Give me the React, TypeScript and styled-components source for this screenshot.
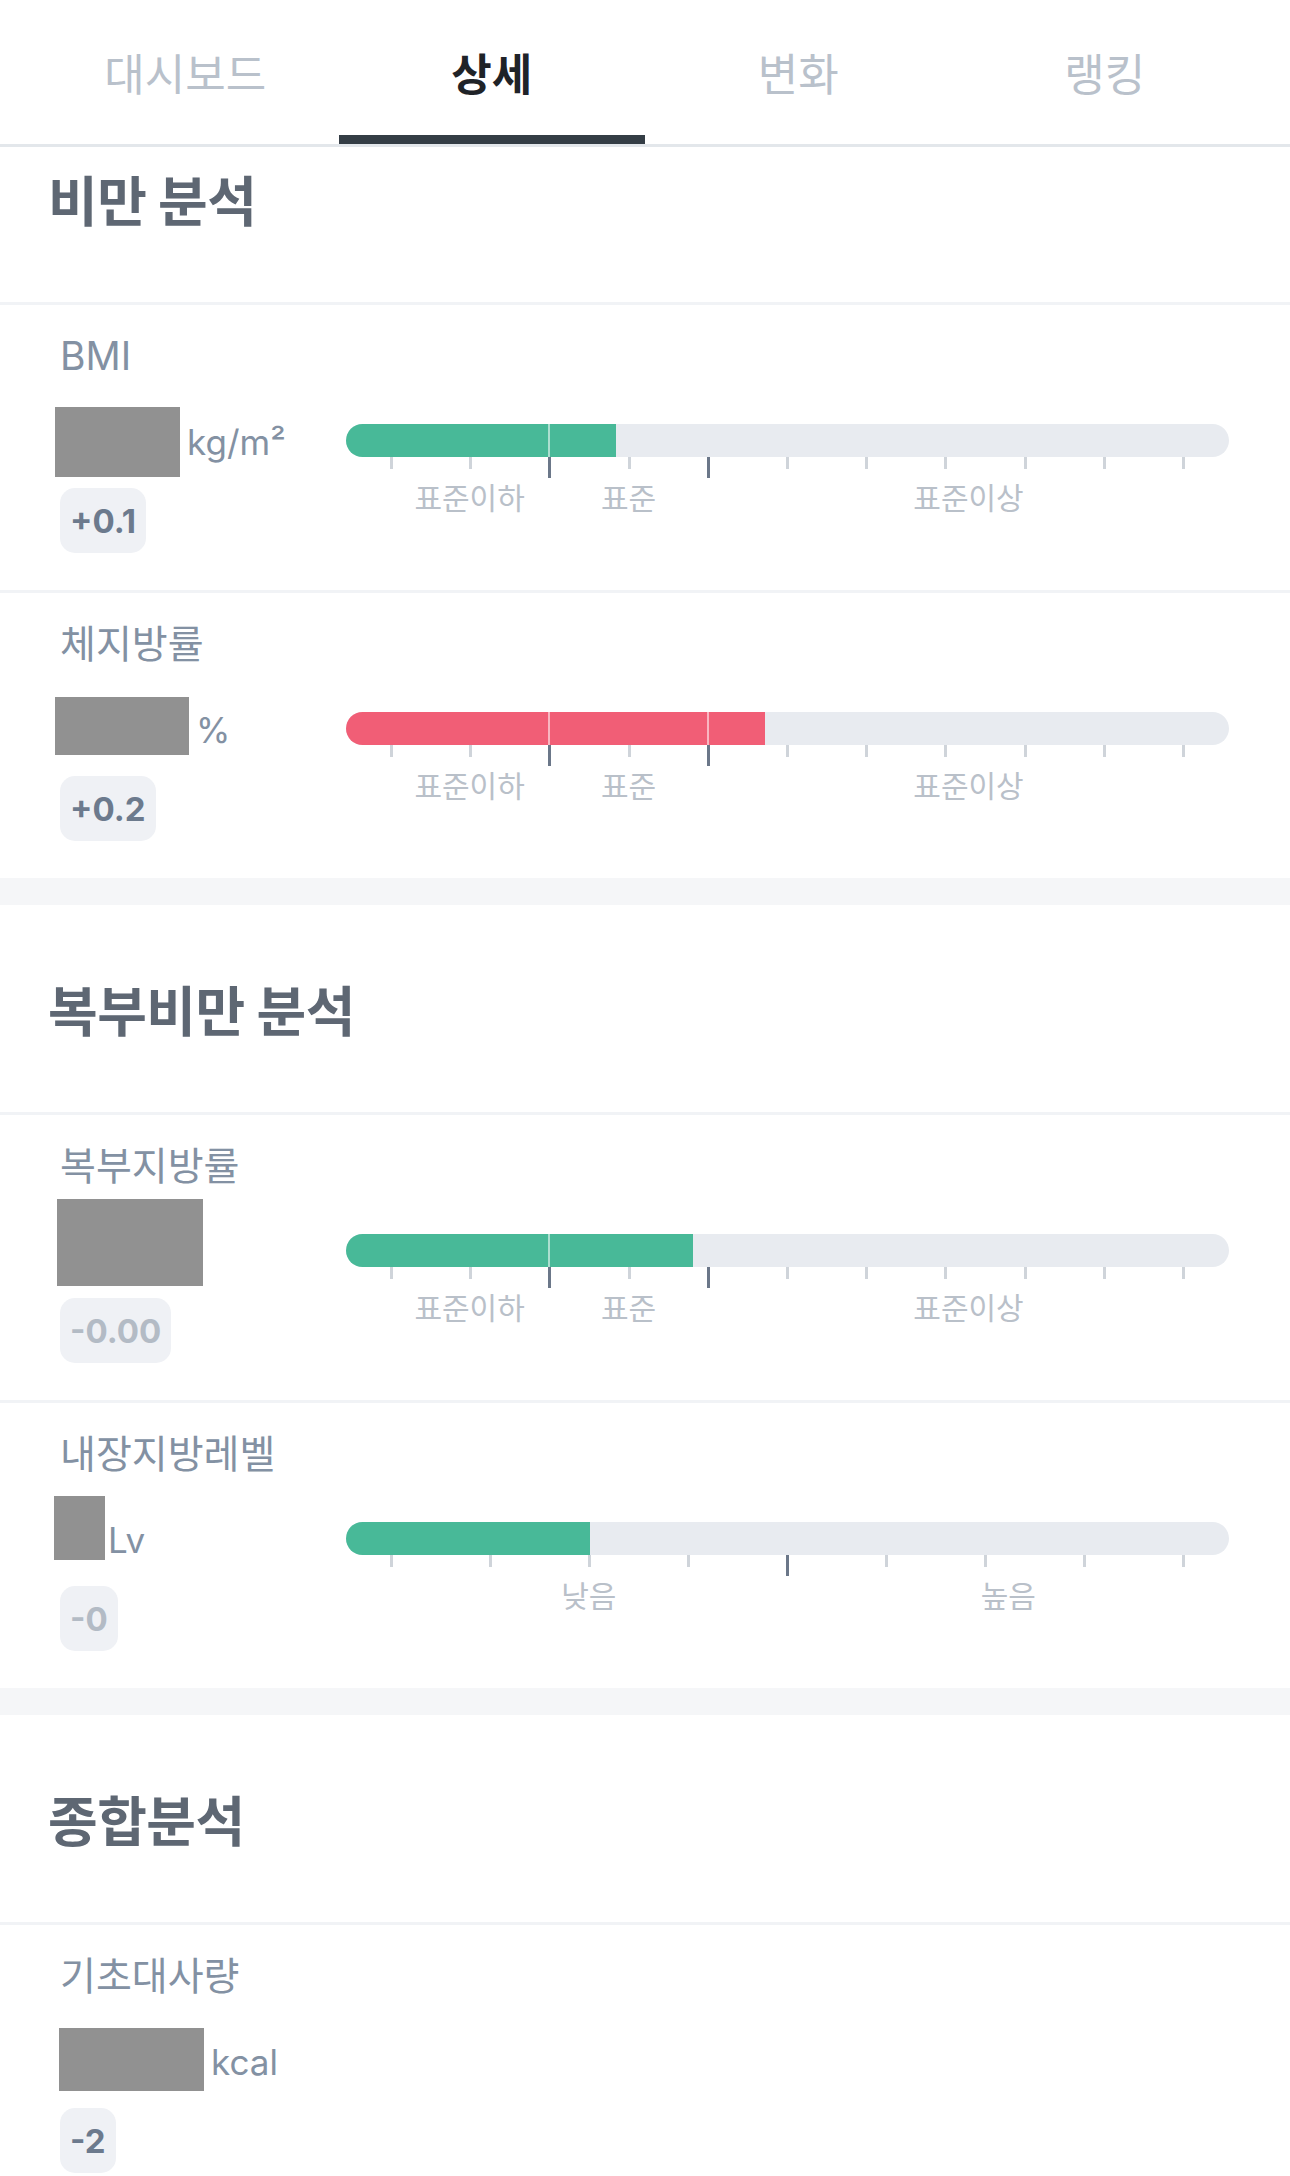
import styled, { createGlobalStyle } from "styled-components";

const GlobalStyle = createGlobalStyle`
  body {
    margin: 0;
    background: #ffffff;
    font-family: Inter, "Noto Sans CJK KR", sans-serif;
  }
`;

const Page = styled.div`
  width: 1290px;
  background: #ffffff;
`;

const TabBar = styled.nav`
  display: grid;
  grid-template-columns: repeat(4, 1fr);
  height: 144px;
  padding: 0 32px;
  border-bottom: 3px solid #e3e7eb;
`;

const Tab = styled.div<{ $active?: boolean }>`
  display: flex;
  align-items: center;
  justify-content: center;
  padding-top: 9px;
  border-bottom: 9px solid ${(p) => (p.$active ? "#343d45" : "transparent")};
  font-family: "Noto Sans CJK KR", sans-serif;
  font-size: 44px;
  font-weight: ${(p) => (p.$active ? 600 : 400)};
  color: ${(p) => (p.$active ? "#1f2328" : "#b9c1cb")};
`;

const SectionHeader = styled.div<{ $first?: boolean }>`
  padding: ${(p) => (p.$first ? "26px" : "78px")} 48px 77px;
`;

const SectionTitle = styled.h2`
  margin: 0;
  font-family: "Noto Sans CJK KR", sans-serif;
  font-size: 54px;
  line-height: 52px;
  font-weight: 700;
  letter-spacing: -0.5px;
  color: #5e6773;
`;

const Band = styled.div`
  height: 27px;
  background: #f5f6f8;
`;

const Item = styled.div`
  display: grid;
  grid-template-columns: 286px 1fr;
  grid-template-rows: auto 70px auto;
  padding: 25px 61px 37px 60px;
  border-top: 3px solid #f1f3f6;
`;

const Label = styled.div`
  grid-column: 1 / -1;
  margin-bottom: 25px;
  font-size: 39px;
  line-height: 52px;
  color: #8391a3;
`;

const ValueRow = styled.div<{ $gap: number }>`
  grid-column: 1;
  grid-row: 2;
  display: flex;
  align-items: center;
  gap: ${(p) => p.$gap}px;
  height: 70px;
`;

// 수치는 가려진 상태로 표시
const Redacted = styled.span<{ $w: number; $h: number; $dx: number; $dy: number }>`
  align-self: flex-start;
  flex: none;
  width: ${(p) => p.$w}px;
  height: ${(p) => p.$h}px;
  margin-left: ${(p) => p.$dx}px;
  margin-top: ${(p) => p.$dy}px;
  background: #919191;
`;

const Unit = styled.span`
  font-size: 35px;
  line-height: 44px;
  color: #8391a3;
`;

const Badge = styled.div<{ $muted?: boolean }>`
  grid-column: 1;
  grid-row: 3;
  justify-self: start;
  display: flex;
  align-items: center;
  height: 65px;
  margin-top: 11px;
  padding: 0 10px;
  border-radius: 15px;
  background: #eff1f5;
  font-size: 33px;
  font-weight: 700;
  color: ${(p) => (p.$muted ? "#b3bbc5" : "#6c7a8d")};
`;

const Gauge = styled.div`
  grid-column: 2;
  grid-row: 2 / 4;
  margin-top: 17px;
`;

const Track = styled.div`
  position: relative;
  height: 33px;
  border-radius: 17px;
  background: #e8ebf0;
  overflow: hidden;
`;

const Fill = styled.div<{ $color: string }>`
  height: 100%;
  background: ${(p) => p.$color};
`;

const Divider = styled.span`
  position: absolute;
  top: 0;
  bottom: 0;
  width: 2px;
  margin-left: -1px;
  background: rgba(255, 255, 255, 0.55);
`;

const TickRow = styled.div`
  display: flex;
  justify-content: space-between;
  align-items: flex-start;
  height: 21px;
  padding: 0 5%;
`;

const Tick = styled.span<{ $major?: boolean }>`
  width: 3px;
  height: ${(p) => (p.$major ? 21 : 12)}px;
  background: ${(p) => (p.$major ? "#6b7789" : "#cfd4da")};
`;

const ScaleLabels = styled.div`
  position: relative;
  height: 36px;
`;

const ScaleLabel = styled.span`
  position: absolute;
  top: 0;
  transform: translateX(-50%);
  font-family: "Noto Sans CJK KR", sans-serif;
  font-size: 30px;
  line-height: 36px;
  color: #b9c0c9;
  white-space: nowrap;
`;

interface IGauge {
  ticks: number;
  major: number[];
  fill: number;
  color: string;
  labels: { text: string; at: number }[];
}

interface IMetric {
  name: string;
  unit?: string;
  gap?: number;
  box: { w: number; h: number; dx: number; dy: number };
  diff: string;
  muted?: boolean;
  gauge?: IGauge;
}

const GREEN = "#48b998";
const RED = "#f15e76";

const standardLabels = [
  { text: "표준이하", at: 14 },
  { text: "표준", at: 32 },
  { text: "표준이상", at: 70.5 },
];

const sections: { title: string; metrics: IMetric[] }[] = [
  {
    title: "비만 분석",
    metrics: [
      {
        name: "BMI",
        unit: "kg/m²",
        box: { w: 125, h: 70, dx: -5, dy: 0 },
        diff: "+0.1",
        gauge: { ticks: 11, major: [2, 4], fill: 30.6, color: GREEN, labels: standardLabels },
      },
      {
        name: "체지방률",
        unit: "%",
        box: { w: 134, h: 58, dx: -5, dy: 2 },
        diff: "+0.2",
        gauge: { ticks: 11, major: [2, 4], fill: 47.5, color: RED, labels: standardLabels },
      },
    ],
  },
  {
    title: "복부비만 분석",
    metrics: [
      {
        name: "복부지방률",
        box: { w: 146, h: 87, dx: -3, dy: -18 },
        diff: "-0.00",
        muted: true,
        gauge: { ticks: 11, major: [2, 4], fill: 39.3, color: GREEN, labels: standardLabels },
      },
      {
        name: "내장지방레벨",
        unit: "Lv",
        gap: 3,
        box: { w: 51, h: 64, dx: -6, dy: -9 },
        diff: "-0",
        muted: true,
        gauge: {
          ticks: 9,
          major: [4],
          fill: 27.6,
          color: GREEN,
          labels: [
            { text: "낮음", at: 27.5 },
            { text: "높음", at: 75 },
          ],
        },
      },
    ],
  },
  {
    title: "종합분석",
    metrics: [
      {
        name: "기초대사량",
        unit: "kcal",
        box: { w: 145, h: 63, dx: -1, dy: 1 },
        diff: "-2",
      },
    ],
  },
];

// 눈금 위치: 트랙 양 끝 5% 안쪽에서 균등 배치
const tickPos = (k: number, n: number) => 5 + (k * 90) / (n - 1);

function GaugeBar({ gauge }: { gauge: IGauge }) {
  // 기준선은 채워진 구간 안에서만 보인다
  const dividers = gauge.major
    .map((k) => tickPos(k, gauge.ticks))
    .filter((pos) => pos < gauge.fill);
  return (
    <Gauge>
      <Track>
        <Fill $color={gauge.color} style={{ width: `${gauge.fill}%` }} />
        {dividers.map((pos) => (
          <Divider key={pos} style={{ left: `${pos}%` }} />
        ))}
      </Track>
      <TickRow>
        {Array.from({ length: gauge.ticks }).map((_, k) => (
          <Tick key={k} $major={gauge.major.includes(k)} />
        ))}
      </TickRow>
      <ScaleLabels>
        {gauge.labels.map((l) => (
          <ScaleLabel key={l.text} style={{ left: `${l.at}%` }}>
            {l.text}
          </ScaleLabel>
        ))}
      </ScaleLabels>
    </Gauge>
  );
}

function App() {
  const tabs = ["대시보드", "상세", "변화", "랭킹"];
  return (
    <Page>
      <GlobalStyle />
      <TabBar>
        {tabs.map((t) => (
          <Tab key={t} $active={t === "상세"}>
            {t}
          </Tab>
        ))}
      </TabBar>
      {sections.map((s, i) => (
        <section key={s.title}>
          {i > 0 && <Band />}
          <SectionHeader $first={i === 0}>
            <SectionTitle>{s.title}</SectionTitle>
          </SectionHeader>
          {s.metrics.map((m) => (
            <Item key={m.name}>
              <Label>{m.name}</Label>
              <ValueRow $gap={m.gap ?? 7}>
                <Redacted $w={m.box.w} $h={m.box.h} $dx={m.box.dx} $dy={m.box.dy} />
                {m.unit && <Unit>{m.unit}</Unit>}
              </ValueRow>
              <Badge $muted={m.muted}>{m.diff}</Badge>
              {m.gauge && <GaugeBar gauge={m.gauge} />}
            </Item>
          ))}
        </section>
      ))}
    </Page>
  );
}

export default App;
